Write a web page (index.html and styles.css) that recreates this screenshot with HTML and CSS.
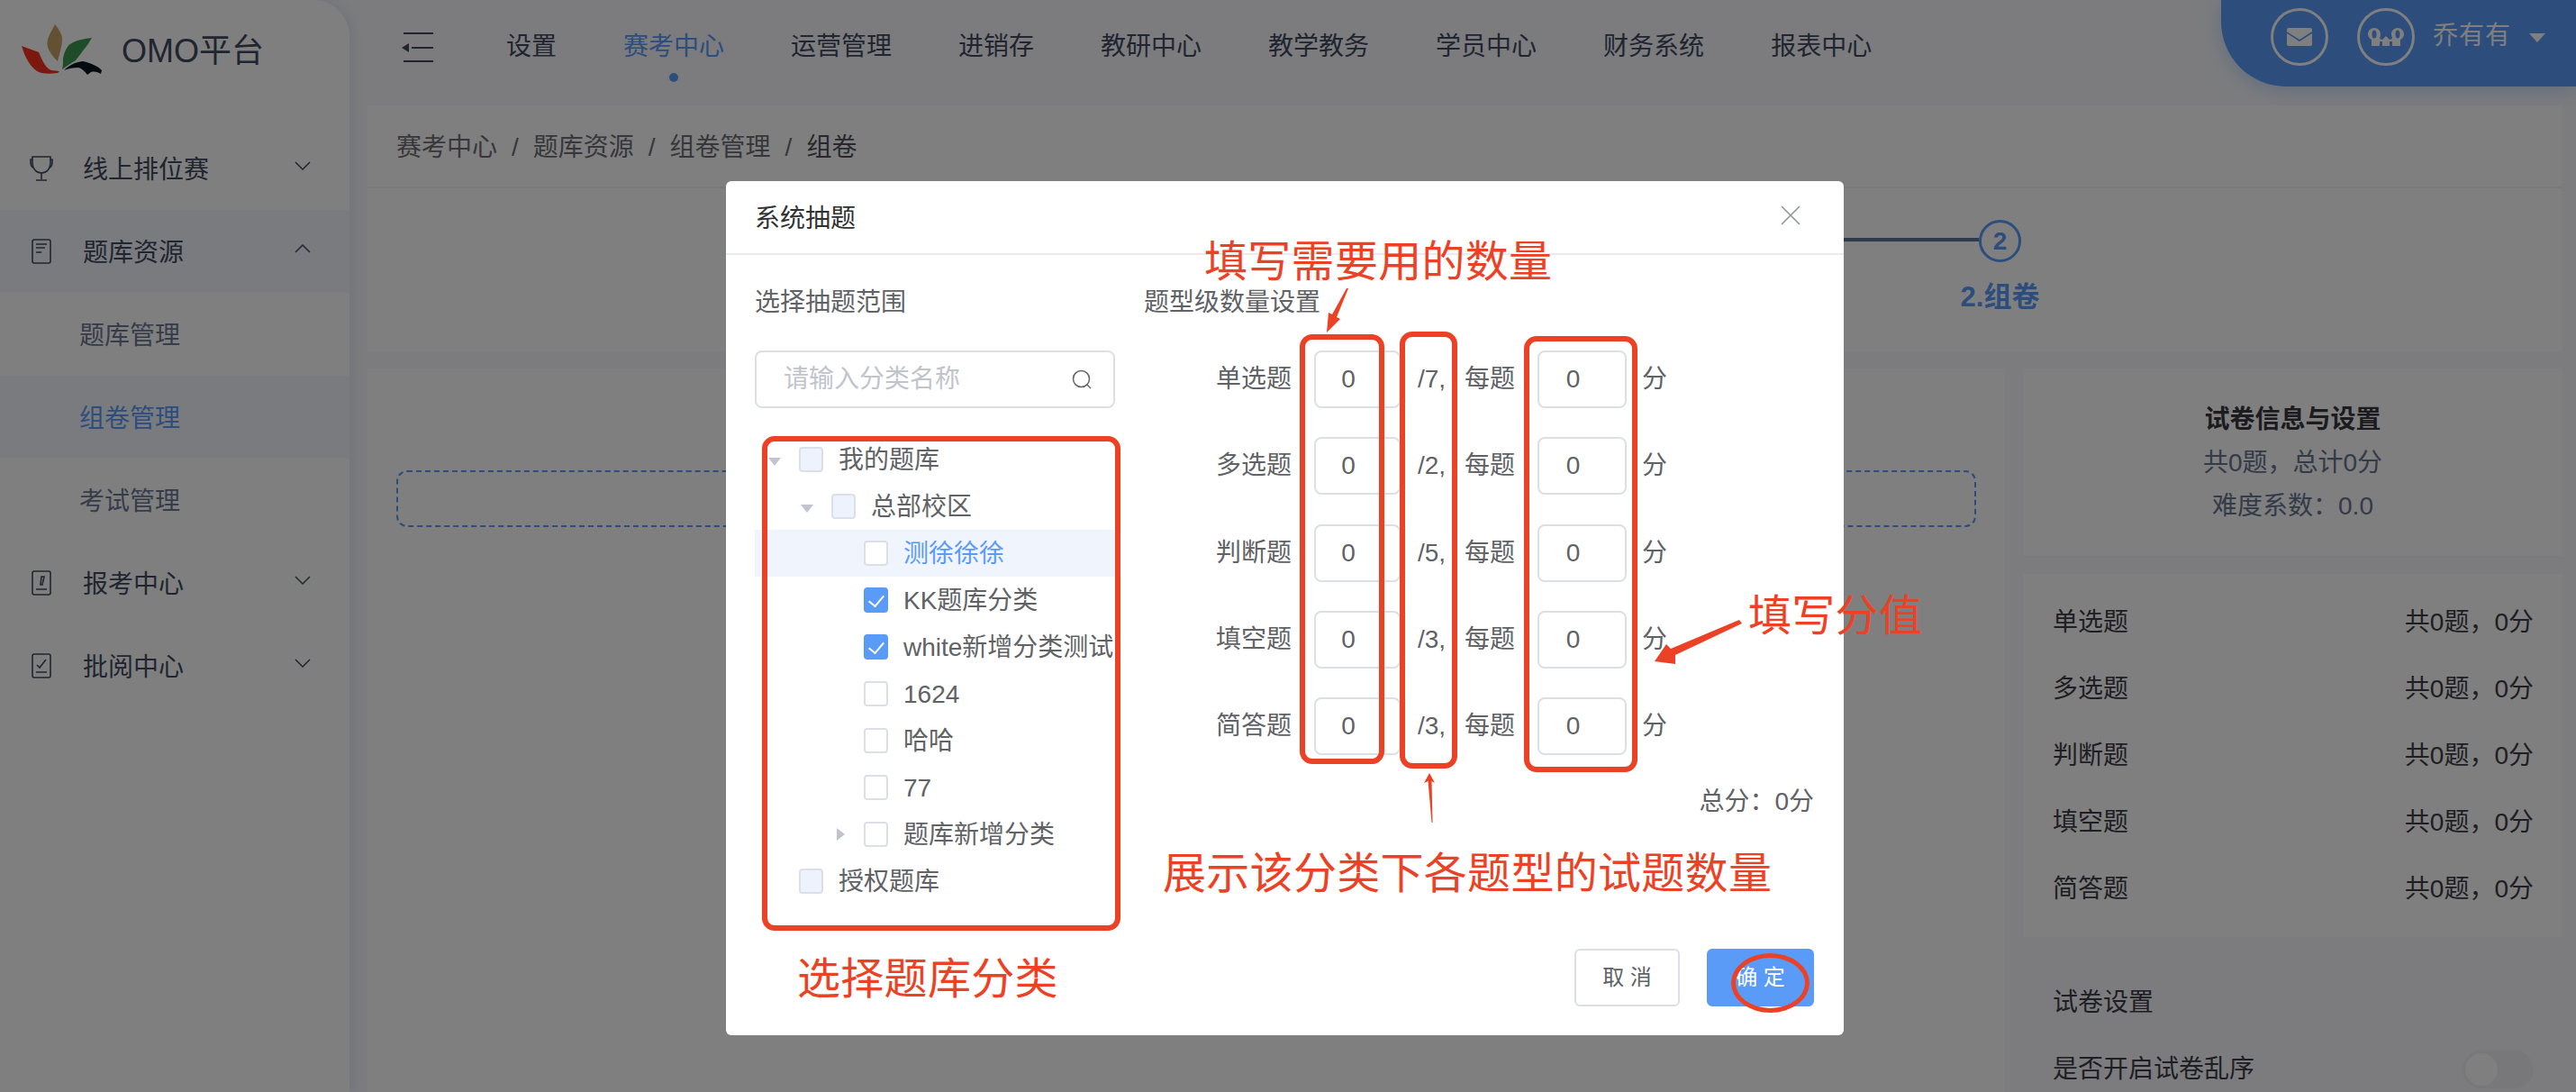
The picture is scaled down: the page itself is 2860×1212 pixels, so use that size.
FILE: index.html
```html
<!DOCTYPE html>
<html lang="en">
  <head>
    <meta charset="UTF-8" />
    <title>组卷</title>
    <link rel="stylesheet" href="styles.css">
  </head>
  <body>
    <aside class="sidebar">
      <div class="brand">
        <svg class="logo" viewBox="0 0 89 56" width="89" height="56">
          <path fill="#f8321e" d="M0 24 L19 31 C23 40 26 48 33 51 L42 52 L40 54 C32 55 24 55 19 53 C11 49 4 38 0 24Z"/>
          <path fill="#c8a064" d="M37 0 C42 6 45 12 45 16 C45 24 42 33 40 41 C33 34 28 27 28.5 20 C29 13 34 7 37 0Z"/>
          <path fill="#3c9650" d="M78 15 L73 23 C68 29 64 35 60 40 C55 43 50 46 45 50 C46 46 46 42 46 38 C47 32 49 27 52.5 23 C59 18 68 16 78 15Z"/>
          <path fill="#0a141e" d="M47 51 C52 46 59 42 68 41 C77 43 84 46 89 51 L88 55 C85 53 81 52 77 53 L73 56 C70 52 67 49 63 48 C57 48 52 49 47 51Z"/>
        </svg>
        <span class="brand-name">OMO平台</span>
      </div>
      <nav class="menu">
        <div class="menu-item">
          <svg class="menu-icon" viewBox="0 0 26 28">
            <path d="M3 1h20v7c0 6-4 11-10 11S3 14 3 8V1z M13 19v7 M7 27h12" />
            <path d="M3 4H1v3c0 3 1 5 3 6 M23 4h2v3c0 3-1 5-3 6" />
          </svg>
          <span>线上排位赛</span>
          <svg class="chevron" viewBox="0 0 18 10"><path d="M1 1l8 8 8-8" /></svg>
        </div>
        <div class="menu-item is-open">
          <svg class="menu-icon" viewBox="0 0 26 28">
            <rect x="3" y="1" width="20" height="26" rx="2" />
            <path d="M7 6h12 M7 10h10 M7 15h6" />
          </svg>
          <span>题库资源</span>
          <svg class="chevron" viewBox="0 0 18 10"><path d="M1 9l8-8 8 8" /></svg>
        </div>
        <div class="sub-item">题库管理</div>
        <div class="sub-item is-active">组卷管理</div>
        <div class="sub-item">考试管理</div>
        <div class="menu-item">
          <svg class="menu-icon" viewBox="0 0 26 28">
            <rect x="3" y="1" width="20" height="26" rx="2" />
            <path d="M7 21h12 M12 16l1-9 3 0-2 9z" />
          </svg>
          <span>报考中心</span>
          <svg class="chevron" viewBox="0 0 18 10"><path d="M1 1l8 8 8-8" /></svg>
        </div>
        <div class="menu-item">
          <svg class="menu-icon" viewBox="0 0 26 28">
            <rect x="3" y="1" width="20" height="26" rx="2" />
            <path d="M7 21h12 M8 13l3 3 7-9" />
          </svg>
          <span>批阅中心</span>
          <svg class="chevron" viewBox="0 0 18 10"><path d="M1 1l8 8 8-8" /></svg>
        </div>
      </nav>
    </aside>

    <div class="main">
      <header class="topbar">
        <div class="toggle">
          <span class="toggle-line"></span>
          <span class="toggle-mid"><i></i><b></b></span>
          <span class="toggle-line"></span>
        </div>
        <nav class="top-nav">
          <a>设置</a>
          <a class="is-current">赛考中心</a>
          <a>运营管理</a>
          <a>进销存</a>
          <a>教研中心</a>
          <a>教学教务</a>
          <a>学员中心</a>
          <a>财务系统</a>
          <a>报表中心</a>
        </nav>
        <div class="user-box">
          <span class="round-btn">
            <svg viewBox="0 0 28 20" width="28" height="20">
              <rect width="28" height="20" rx="2" fill="#fff" />
              <path d="M0 5l14 9 14-9" fill="none" stroke="#5a9bf8" stroke-width="1.5" />
            </svg>
          </span>
          <span class="round-btn">
            <svg viewBox="0 0 40 20" width="40" height="20">
              <path fill="#fff" d="M7 0c4 0 7 3 7 7 0 2-1 4-1 5l3 1 4-4 4 4 3-1c0-1-1-3-1-5 0-4 3-7 7-7s7 3 7 7c0 3-2 5-4 6v7H27v-5h-3v5h-8v-5h-3v5H4v-7c-2-1-4-3-4-6 0-4 3-7 7-7z" />
              <ellipse cx="7" cy="7" rx="2.5" ry="4.5" fill="#5a9bf8" />
              <ellipse cx="33" cy="7" rx="2.5" ry="4.5" fill="#5a9bf8" />
            </svg>
          </span>
          <span class="user-name">乔有有</span>
          <span class="user-caret"></span>
        </div>
      </header>

      <div class="breadcrumb">
        <span>赛考中心</span><i>/</i><span>题库资源</span><i>/</i><span>组卷管理</span><i>/</i><span class="crumb-last">组卷</span>
      </div>

      <section class="steps">
        <div class="step-line"></div>
        <div class="step-dot">2</div>
        <div class="step-label">2.组卷</div>
      </section>

      <div class="content">
        <section class="paper-card">
          <div class="dashed-box"></div>
        </section>
        <div class="side-col">
          <section class="info-card">
            <div class="info-title">试卷信息与设置</div>
            <div>共0题，总计0分</div>
            <div>难度系数：0.0</div>
          </section>
          <section class="count-card">
            <div class="count-row"><span>单选题</span><span>共0题，0分</span></div>
            <div class="count-row"><span>多选题</span><span>共0题，0分</span></div>
            <div class="count-row"><span>判断题</span><span>共0题，0分</span></div>
            <div class="count-row"><span>填空题</span><span>共0题，0分</span></div>
            <div class="count-row"><span>简答题</span><span>共0题，0分</span></div>
          </section>
          <section class="setting-card">
            <div class="count-row"><span>试卷设置</span></div>
            <div class="count-row"><span>是否开启试卷乱序</span><span class="switch"></span></div>
          </section>
        </div>
      </div>
    </div>

    <div class="mask"></div>

    <div class="dialog">
      <div class="dialog-head">
        <span>系统抽题</span>
        <svg class="dialog-close" viewBox="0 0 22 22" width="22" height="22"><path d="M1 1l20 20 M21 1L1 21" /></svg>
      </div>
      <div class="dialog-body">
        <div class="range-col">
          <div class="col-title">选择抽题范围</div>
          <div class="search">
            <input type="text" placeholder="请输入分类名称" />
            <svg viewBox="0 0 22 22" width="22" height="22"><circle cx="10.5" cy="10.5" r="9" /><path d="M17 17l4 4" /></svg>
          </div>
          <div class="tree">
            <div class="tree-row"><span class="arrow-down"></span><span class="check is-disabled"></span>我的题库</div>
            <div class="tree-row lv2"><span class="arrow-down"></span><span class="check is-disabled"></span>总部校区</div>
            <div class="tree-row lv3 is-current"><span class="arrow-none"></span><span class="check"></span>测徐徐徐</div>
            <div class="tree-row lv3"><span class="arrow-none"></span><span class="check is-checked"></span>KK题库分类</div>
            <div class="tree-row lv3"><span class="arrow-none"></span><span class="check is-checked"></span>white新增分类测试</div>
            <div class="tree-row lv3"><span class="arrow-none"></span><span class="check"></span>1624</div>
            <div class="tree-row lv3"><span class="arrow-none"></span><span class="check"></span>哈哈</div>
            <div class="tree-row lv3"><span class="arrow-none"></span><span class="check"></span>77</div>
            <div class="tree-row lv3"><span class="arrow-right"></span><span class="check"></span>题库新增分类</div>
            <div class="tree-row"><span class="arrow-none"></span><span class="check is-disabled"></span>授权题库</div>
          </div>
        </div>
        <div class="type-col">
          <div class="col-title">题型级数量设置</div>
          <div class="type-rows">
            <div class="type-row">
              <label>单选题</label><input class="num-a" value="0" /><span class="total">/7,</span><span class="each">每题</span><input class="num-b" value="0" /><span class="unit">分</span>
            </div>
            <div class="type-row">
              <label>多选题</label><input class="num-a" value="0" /><span class="total">/2,</span><span class="each">每题</span><input class="num-b" value="0" /><span class="unit">分</span>
            </div>
            <div class="type-row">
              <label>判断题</label><input class="num-a" value="0" /><span class="total">/5,</span><span class="each">每题</span><input class="num-b" value="0" /><span class="unit">分</span>
            </div>
            <div class="type-row">
              <label>填空题</label><input class="num-a" value="0" /><span class="total">/3,</span><span class="each">每题</span><input class="num-b" value="0" /><span class="unit">分</span>
            </div>
            <div class="type-row">
              <label>简答题</label><input class="num-a" value="0" /><span class="total">/3,</span><span class="each">每题</span><input class="num-b" value="0" /><span class="unit">分</span>
            </div>
          </div>
          <div class="sum">总分：0分</div>
        </div>
      </div>
      <div class="dialog-foot">
        <button class="btn">取 消</button>
        <button class="btn btn-primary">确 定</button>
      </div>
    </div>

    <!-- red notes drawn over the screenshot -->
    <div class="note-box box-tree"></div>
    <div class="note-box box-num"></div>
    <div class="note-box box-total"></div>
    <div class="note-box box-score"></div>
    <div class="note-ring"></div>
    <div class="note note-num">填写需要用的数量</div>
    <div class="note note-score">填写分值</div>
    <div class="note note-total">展示该分类下各题型的试题数量</div>
    <div class="note note-tree">选择题库分类</div>
    <svg class="note-arrows" viewBox="0 0 2860 1212" width="2860" height="1212">
      <polygon points="1497,320 1484,352 1488,354 1473,369 1475,347 1479,349 1495,320" />
      <polygon points="1931,688 1934,692 1860,727 1860,737 1837,734 1850,715 1855,720" />
      <polygon points="1587,858 1593,869 1589.5,867 1590.5,913 1589.5,913 1585.5,867 1581,869" />
    </svg>
  </body>
</html>
```

FILE: styles.css
```css
:root {
  --blue: #5a9bf8;
  --red: #ec4124;
  --nav-text: #404a60;
  --line: #dcdfe6;
}

* {
  margin: 0;
  padding: 0;
  box-sizing: border-box;
}

body {
  font-family: "Liberation Sans", "Noto Sans CJK SC", sans-serif;
  font-size: 28px;
  line-height: 40px;
  background-color: #f8f9fd;
  display: flex;
  width: 2860px;
  height: 1212px;
  overflow: hidden;
  position: relative;
}

/* left menu */
.sidebar {
  width: 388px;
  flex-shrink: 0;
  background-color: #fff;
  border-top-right-radius: 40px;
  box-shadow: 4px 0 14px rgba(90, 100, 170, 0.12);
  color: var(--nav-text);
}

.brand {
  height: 141px;
  display: flex;
  padding: 27px 0 0 24px;
  gap: 22px;
}

.brand-name {
  font-size: 36px;
  line-height: 60px;
}

.menu-item {
  height: 92px;
  display: flex;
  align-items: center;
  padding-left: 33px;
  gap: 33px;
}

.menu-item span {
  padding-top: 3px;
}

.menu-item.is-open,
.sub-item.is-active {
  background-color: #f5f7fe;
}

.menu-icon {
  width: 26px;
  height: 28px;
  fill: none;
  stroke: var(--nav-text);
  stroke-width: 1.6;
}

.chevron {
  width: 18px;
  height: 10px;
  margin: 0 43px 6px auto;
  fill: none;
  stroke: var(--nav-text);
  stroke-width: 1.5;
}

.sub-item {
  height: 92px;
  line-height: 95px;
  padding-left: 88px;
  color: #6e7896;
}

.sub-item.is-active {
  color: var(--blue);
}

/* page column */
.main {
  flex: 1;
  min-width: 0;
  padding: 0 15px 0 20px;
  display: flex;
  flex-direction: column;
}

.topbar {
  height: 117px;
  flex-shrink: 0;
  display: flex;
  margin-right: -15px;
  padding: 32px 0 0 38px;
  color: var(--nav-text);
}

.toggle {
  width: 35px;
  height: 33px;
  margin: 4px 7px 0 0;
  display: flex;
  flex-direction: column;
  justify-content: space-between;
}

.toggle-line {
  height: 2px;
  margin-left: 2px;
  background-color: var(--nav-text);
}

.toggle-mid {
  display: flex;
  align-items: center;
  height: 2px;
}

.toggle-mid i {
  border-style: solid;
  border-width: 5px 8px 5px 0;
  border-color: transparent var(--nav-text) transparent transparent;
}

.toggle-mid b {
  flex: 1;
  height: 2px;
  margin-left: 3px;
  background-color: var(--nav-text);
}

.top-nav {
  display: flex;
  padding-left: 37px;
}

.top-nav a {
  padding: 0 37px;
  position: relative;
  white-space: nowrap;
}

.top-nav .is-current {
  color: var(--blue);
}

.top-nav .is-current::after {
  content: "";
  position: absolute;
  left: 50%;
  top: 49px;
  width: 10px;
  height: 10px;
  margin-left: -5px;
  border-radius: 50%;
  background-color: var(--blue);
}

.user-box {
  margin: -32px 0 0 auto;
  width: 394px;
  height: 96px;
  flex-shrink: 0;
  display: flex;
  align-items: flex-start;
  padding: 9px 0 0 55px;
  background-color: var(--blue);
  border-bottom-left-radius: 72px;
  box-shadow: 0 4px 22px rgba(90, 155, 248, 0.35);
  color: #fff;
}

.round-btn {
  width: 64px;
  height: 64px;
  margin-right: 32px;
  border: 3px solid #fff;
  border-radius: 50%;
  display: flex;
  align-items: center;
  justify-content: center;
}

.round-btn + .round-btn {
  margin-right: 20px;
}

.user-name {
  line-height: 62px;
  letter-spacing: 1px;
}

.user-caret {
  margin: 28px 0 0 20px;
  border-style: solid;
  border-width: 10px 9px 0 9px;
  border-color: #fff transparent transparent transparent;
}

.breadcrumb {
  height: 92px;
  flex-shrink: 0;
  display: flex;
  align-items: center;
  padding: 3px 0 0 32px;
  background-color: #fff;
  border-bottom: 2px solid #f0f0f6;
  color: #6e6e76;
}

.breadcrumb i {
  margin: 0 16px;
  font-style: normal;
}

.crumb-last {
  color: #505058;
}

.steps {
  height: 181px;
  flex-shrink: 0;
  display: grid;
  grid-template-columns: 1789px 47px;
  grid-template-rows: 47px 40px;
  row-gap: 19px;
  padding-top: 35px;
  background-color: #fff;
}

.step-line {
  height: 4px;
  margin-left: 1000px;
  align-self: center;
  background-color: #5e7498;
  position: relative;
  top: -2px;
}

.step-dot {
  border: 3px solid var(--blue);
  border-radius: 50%;
  color: var(--blue);
  font-weight: bold;
  text-align: center;
  line-height: 41px;
}

.step-label {
  grid-column: 2;
  justify-self: center;
  white-space: nowrap;
  font-size: 31px;
  font-weight: bold;
  color: var(--blue);
}

.content {
  flex: 1;
  display: flex;
  gap: 20px;
  margin-top: 19px;
  min-height: 0;
}

.paper-card {
  width: 1818px;
  padding: 113px 32px 0;
  background-color: #fff;
}

.dashed-box {
  height: 63px;
  border: 2px dashed var(--blue);
  border-radius: 12px;
}

.side-col {
  flex: 1;
  display: flex;
  flex-direction: column;
  gap: 20px;
}

.side-col section {
  flex-shrink: 0;
}

.info-card {
  height: 208px;
  padding-top: 33px;
  background-color: #fff;
  text-align: center;
  line-height: 48px;
  color: #667490;
}

.info-title {
  font-weight: bold;
  color: #383840;
}

.count-card {
  height: 403px;
  padding: 17px 32px 0 33px;
  background-color: #fff;
}

.count-row {
  height: 74px;
  display: flex;
  align-items: center;
  justify-content: space-between;
  color: #3d3d46;
}

.setting-card {
  margin-top: -20px;
  padding: 36px 32px 0 33px;
}

.switch {
  width: 79px;
  height: 42px;
  padding: 3px;
  border-radius: 21px;
  background-color: #f0f1f5;
}

.switch::before {
  content: "";
  display: block;
  width: 36px;
  height: 36px;
  border-radius: 50%;
  background-color: #fff;
}

/* dark layer under the dialog */
.mask {
  position: absolute;
  inset: 0;
  background-color: rgba(0, 0, 0, 0.5);
}

.dialog {
  position: absolute;
  left: 806px;
  top: 201px;
  width: 1241px;
  height: 948px;
  display: flex;
  flex-direction: column;
  background-color: #fff;
  border-radius: 6px;
  color: #606266;
}

.dialog-head {
  height: 82px;
  flex-shrink: 0;
  display: flex;
  align-items: center;
  justify-content: space-between;
  padding: 3px 48px 0 32px;
  border-bottom: 2px solid #e9ebf2;
  color: #303133;
}

.dialog-close {
  margin-top: -8px;
  fill: none;
  stroke: #909399;
  stroke-width: 1.6;
}

.dialog-body {
  display: flex;
  gap: 32px;
  padding: 33px 33px 0 32px;
}

.range-col {
  width: 400px;
  flex-shrink: 0;
}

.type-col {
  flex: 1;
}

.col-title {
  margin-bottom: 33px;
}

.search {
  height: 64px;
  display: flex;
  align-items: center;
  padding-right: 24px;
  border: 2px solid var(--line);
  border-radius: 8px;
}

.search input {
  flex: 1;
  min-width: 0;
  padding-left: 30px;
  border: none;
  outline: none;
  font: inherit;
  color: #606266;
}

.search input::placeholder {
  color: #c0c4cc;
}

.search svg {
  fill: none;
  stroke: #606266;
  stroke-width: 1.5;
}

.tree {
  margin-top: 31px;
}

.tree-row {
  height: 52px;
  display: flex;
  align-items: center;
  padding: 2px 0 0 15px;
  white-space: nowrap;
}

.tree-row > span {
  margin-top: -2px;
}

.tree-row.lv2 {
  padding-left: 51px;
}

.tree-row.lv3 {
  padding-left: 87px;
}

.tree-row.is-current {
  background-color: #f0f5fd;
  color: var(--blue);
}

.arrow-down,
.arrow-right,
.arrow-none {
  width: 34px;
  flex-shrink: 0;
}

.arrow-down::before,
.arrow-right::before {
  content: "";
  display: block;
  width: 0;
  border-style: solid;
}

.arrow-down::before {
  margin-top: 4px;
  border-width: 9px 7px 0 7px;
  border-color: #c0c4cc transparent transparent transparent;
}

.arrow-right::before {
  margin-left: 4px;
  border-width: 7px 0 7px 9px;
  border-color: transparent transparent transparent #c0c4cc;
}

.check {
  width: 27px;
  height: 28px;
  margin-right: 17px;
  flex-shrink: 0;
  border: 2px solid var(--line);
  border-radius: 4px;
  background-color: #fff;
  position: relative;
}

.check.is-disabled {
  background-color: #edf2fc;
}

.check.is-checked {
  background-color: var(--blue);
  border-color: var(--blue);
}

.check.is-checked::after {
  content: "";
  position: absolute;
  left: 7px;
  top: 3px;
  width: 8px;
  height: 14px;
  border: solid #fff;
  border-width: 0 2px 2px 0;
  transform: rotate(40deg);
}

.type-rows {
  display: flex;
  flex-direction: column;
  gap: 32.25px;
}

.type-row {
  display: flex;
  align-items: center;
  height: 64px;
}

.type-row label {
  width: 164px;
  text-align: right;
}

.type-row input {
  height: 64px;
  padding-right: 20px;
  border: 2px solid var(--line);
  border-radius: 8px;
  outline: none;
  font: inherit;
  color: #606266;
  text-align: center;
}

.num-a {
  width: 96px;
  margin-left: 25px;
}

.total {
  width: 32px;
  margin-left: 19px;
}

.each {
  margin-left: 20px;
}

.num-b {
  width: 99px;
  margin-left: 25px;
}

.unit {
  margin-left: 17px;
}

.sum {
  margin-top: 32px;
  text-align: right;
}

.dialog-foot {
  margin-top: auto;
  padding: 0 33px 32px 0;
  display: flex;
  justify-content: flex-end;
  gap: 30px;
}

.btn {
  width: 117px;
  height: 64px;
  border: 2px solid var(--line);
  border-radius: 6px;
  background-color: #fff;
  font: inherit;
  font-size: 24px;
  color: #606266;
}

.btn-primary {
  width: 119px;
  background-color: var(--blue);
  border-color: var(--blue);
  color: #fff;
}

/* annotations */
.note-box,
.note-ring {
  position: absolute;
  border: 6px solid var(--red);
  border-radius: 14px;
}

.box-tree {
  left: 846px;
  top: 484px;
  width: 398px;
  height: 549px;
}

.box-num {
  left: 1443px;
  top: 371px;
  width: 94px;
  height: 477px;
}

.box-total {
  left: 1554px;
  top: 368px;
  width: 64px;
  height: 485px;
}

.box-score {
  left: 1692px;
  top: 373px;
  width: 126px;
  height: 484px;
}

.note-ring {
  left: 1922px;
  top: 1058px;
  width: 87px;
  height: 66px;
  border-width: 5px;
  border-radius: 50%;
}

.note {
  position: absolute;
  font-size: 48px;
  line-height: 60px;
  letter-spacing: 0.3px;
  color: var(--red);
  white-space: nowrap;
}

.note-num {
  left: 1337px;
  top: 261px;
}

.note-score {
  left: 1941px;
  top: 654px;
}

.note-total {
  left: 1291px;
  top: 940px;
}

.note-tree {
  left: 885px;
  top: 1057px;
}

.note-arrows {
  position: absolute;
  left: 0;
  top: 0;
  fill: var(--red);
  pointer-events: none;
}
```
